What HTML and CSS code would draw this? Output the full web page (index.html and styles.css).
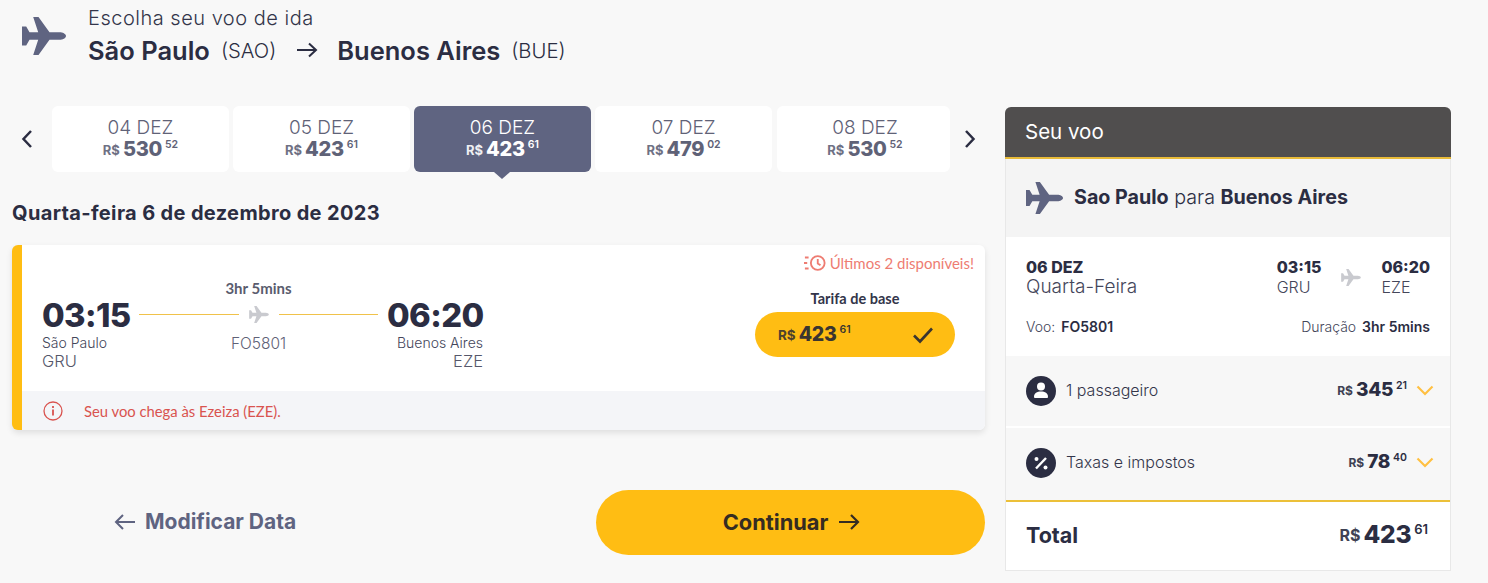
FILE: index.html
```html
<!DOCTYPE html>
<html lang="pt-BR">
<head>
<meta charset="utf-8">
<title>Escolha seu voo</title>
<link rel="stylesheet" href="styles.css">
</head>
<body>
<svg class="defs" width="0" height="0" aria-hidden="true"><defs>
<symbol id="plane" viewBox="0 0 44 38"><path d="M44 19c0-2.200-3.500-3.800-6.500-3.800H27.500L16.500 0h-5.300l5 15.200H7.500L4.200 9.500H0v19h4.200l3.300-5.700h8.700L11.200 38h5.300l11-15.200H37.500c3 0 6.500-1.600 6.500-3.800z"/></symbol>
</defs></svg>
<main class="page">
  <section class="left">
    <header class="head">
      <svg class="head-plane"><use href="#plane"/></svg>
      <div class="head-text">
        <div class="head-sub">Escolha seu voo de ida</div>
        <div class="head-route"><b>São Paulo</b><span class="code">(SAO)</span>
          <svg class="route-arrow" viewBox="0 0 22 16"><path d="M1 8h19M13 1.500 20 8l-7 6.500" fill="none" stroke="currentColor" stroke-width="2"/></svg>
          <b>Buenos Aires</b><span class="code">(BUE)</span></div>
      </div>
    </header>
    <nav class="dates">
      <svg class="nav-chev" viewBox="0 0 12 20"><path d="M10 2 2.500 10l7.500 8" fill="none" stroke="currentColor" stroke-width="2.500"/></svg>
      <div class="date"><div class="d">04 DEZ</div><div class="p"><small>R$</small><b>530</b><sup>52</sup></div></div>
      <div class="date"><div class="d">05 DEZ</div><div class="p"><small>R$</small><b>423</b><sup>61</sup></div></div>
      <div class="date active"><div class="d">06 DEZ</div><div class="p"><small>R$</small><b>423</b><sup>61</sup></div></div>
      <div class="date"><div class="d">07 DEZ</div><div class="p"><small>R$</small><b>479</b><sup>02</sup></div></div>
      <div class="date last"><div class="d">08 DEZ</div><div class="p"><small>R$</small><b>530</b><sup>52</sup></div></div>
      <svg class="nav-chev" viewBox="0 0 12 20"><path d="M2 2l7.500 8L2 18" fill="none" stroke="currentColor" stroke-width="2.500"/></svg>
    </nav>
    <h2 class="day">Quarta-feira 6 de dezembro de 2023</h2>
    <article class="card">
      <div class="card-body">
        <div class="alert">
          <svg class="alert-ico" viewBox="0 0 24 18"><g fill="none" stroke="currentColor" stroke-width="2"><circle cx="15" cy="9" r="7.500"/><path d="M15 4.500V9.500l3 2"/><path d="M1 3h4M0 9h3.500M1 15h4"/></g></svg>
          <span>Últimos 2 disponíveis!</span>
        </div>
        <div class="flight">
          <div class="end">
            <div class="time">03:15</div><div class="city">São Paulo</div><div class="iata">GRU</div>
          </div>
          <div class="mid">
            <div class="dur">3hr 5mins</div>
            <div class="track"><i></i><svg class="mini-plane"><use href="#plane"/></svg><i></i></div>
            <div class="fno">FO5801</div>
          </div>
          <div class="end right">
            <div class="time">06:20</div><div class="city">Buenos Aires</div><div class="iata">EZE</div>
          </div>
          <div class="fare">
            <div class="fare-name">Tarifa de base</div>
            <div class="fare-btn">
              <div class="p"><small>R$</small><b>423</b><sup>61</sup></div>
              <svg class="check" viewBox="0 0 22 18"><path d="M2 9.500 8 15.500 20 2.500" fill="none" stroke="currentColor" stroke-width="2.600"/></svg>
            </div>
          </div>
        </div>
        <div class="note">
          <svg class="note-ico" viewBox="0 0 20 20"><circle cx="10" cy="10" r="9" fill="none" stroke="currentColor" stroke-width="1.300"/><path d="M10 8.500v6M10 5v2" stroke="currentColor" stroke-width="1.800"/></svg>
          <span>Seu voo chega às Ezeiza (EZE).</span>
        </div>
      </div>
    </article>
    <div class="actions">
      <a class="back"><svg class="back-arrow" viewBox="0 0 22 16"><path d="M21 8H2M9 1 2 8l7 7" fill="none" stroke="currentColor" stroke-width="2"/></svg>Modificar Data</a>
      <a class="go">Continuar<svg class="go-arrow" viewBox="0 0 22 16"><path d="M1 8h19M13 1l7 7-7 7" fill="none" stroke="currentColor" stroke-width="2.200"/></svg></a>
    </div>
  </section>
  <aside class="side">
    <div class="side-head">Seu voo</div>
    <div class="side-route"><svg class="side-plane"><use href="#plane"/></svg><div><b>Sao Paulo</b> para <b>Buenos Aires</b></div></div>
    <div class="side-info">
      <div class="info-top">
        <div class="col"><b>06 DEZ</b><span class="weekday">Quarta-Feira</span></div>
        <div class="times">
          <div class="col"><b>03:15</b><span>GRU</span></div>
          <svg class="mini-plane"><use href="#plane"/></svg>
          <div class="col"><b>06:20</b><span>EZE</span></div>
        </div>
      </div>
      <div class="info-bot">
        <div>Voo: <b>FO5801</b></div>
        <div>Duração <b>3hr 5mins</b></div>
      </div>
    </div>
    <div class="row">
      <svg class="round" viewBox="0 0 30 30"><circle cx="15" cy="15" r="15" fill="#2b2d42"/><circle cx="15" cy="10.500" r="4" fill="#fff"/><path d="M8 21c0-4 3-5.500 7-5.500s7 1.500 7 5.500c0 .8-.6 1-1.200 1H9.200C8.600 22 8 21.800 8 21z" fill="#fff"/></svg>
      <span class="row-name">1 passageiro</span>
      <div class="p"><small>R$</small><b>345</b><sup>21</sup></div>
      <svg class="chev" viewBox="0 0 18 11"><path d="M1.500 1.500 9 9l7.500-7.500" fill="none" stroke="currentColor" stroke-width="2.200"/></svg>
    </div>
    <div class="row row2">
      <svg class="round" viewBox="0 0 30 30"><circle cx="15" cy="15" r="15" fill="#2b2d42"/><path d="M10 20.500 20 10" stroke="#fff" stroke-width="2.400"/><circle cx="10.500" cy="11" r="2" fill="#fff"/><circle cx="19.500" cy="19.500" r="2" fill="#fff"/></svg>
      <span class="row-name">Taxas e impostos</span>
      <div class="p"><small>R$</small><b>78</b><sup>40</sup></div>
      <svg class="chev" viewBox="0 0 18 11"><path d="M1.500 1.500 9 9l7.500-7.500" fill="none" stroke="currentColor" stroke-width="2.200"/></svg>
    </div>
    <div class="total">
      <b class="total-name">Total</b>
      <div class="p"><small>R$</small><b>423</b><sup>61</sup></div>
    </div>
  </aside>
</main>
</body>
</html>
```

FILE: styles.css
```css
* { box-sizing: border-box; }
html, body { margin: 0; height: 583px; overflow: hidden; }
body { background: #f8f8f8; color: #2b2d42; font-family: Inter, "Liberation Sans", sans-serif; }
.defs { display: block; height: 0; }
.page { display: flex; padding: 0 37px 0 12px; gap: 20px; }
.left { width: 973px; flex: none; }
.side { width: 446px; flex: none; margin-top: 107px; border: 1px solid #e8e8e8; border-top: 0; border-radius: 6px 6px 0 0; height: 464px; background: #fff; }

.head { display: flex; height: 106px; padding: 5px 0 0 10px; }
.head-plane { width: 44px; height: 38px; margin: 12px 22px 0 0; fill: #5f6481; }
.head-sub { font-size: 20px; letter-spacing: .5px; font-weight: 300; color: #33354a; line-height: 26px; }
.head-route { display: flex; align-items: center; font-size: 25.500px; height: 36px; margin-top: 1px; color: #2b2d42; }
.head-route b { font-weight: 600; }
.code { font-size: 20.300px; font-weight: 300; margin-left: 11px; }
.route-arrow { width: 22px; height: 16px; margin: 0 19px 0 20px; }

.dates { display: flex; align-items: center; height: 66px; margin-right: -2px; }
.nav-chev { width: 12px; height: 20px; flex: none; color: #2b2d42; margin: 0 19px 0 9px; }
.nav-chev:last-child { margin: 0 0 0 14px; }
.date { width: 177px; height: 66px; margin-right: 4px; background: #fff; border-radius: 6px; text-align: center; color: #5f6277; position: relative; padding-top: 11px; }
.date.last { width: 173px; margin: 0 0 0 1px; padding-left: 3px; }
.date.active { background: #5f6481; color: #fff; }
.date.active::after { content: ""; position: absolute; left: 80px; bottom: -7px; border: 8px solid transparent; border-bottom: 0; border-top: 7px solid #5f6481; }
.d { font-size: 19px; font-weight: 300; line-height: 21px; }
.p { display: flex; align-items: flex-start; justify-content: center; font-weight: 700; }
.p small { font-size: 13px; line-height: 22px; margin: 1px 3px 0 0; opacity: .9; }
.p b { font-size: 20px; line-height: 22px; font-weight: 800; letter-spacing: -.3px; }
.p sup { font-size: 10.500px; line-height: 14px; margin-left: 3px; font-weight: 600; }

.day { font-size: 20px; letter-spacing: .35px; font-weight: 700; margin: 31px 0 0; height: 42px; line-height: 21px; color: #2b2d42; }

.card { height: 185px; border-left: 10px solid #ffbd13; border-radius: 6px; box-shadow: 0 3px 6px rgba(0, 0, 0, .1); background: #fff; overflow: hidden; }
.card-body { height: 100%; display: flex; flex-direction: column; }
.alert { height: 35px; padding: 8px 11px 0 0; display: flex; justify-content: flex-end; align-items: flex-start; font: 400 15px/20px Lato, sans-serif; color: #ee7c72; }
.alert-ico { width: 22px; height: 18px; margin: 1px 4px 0 0; }
.flight { flex: 1; display: flex; align-items: flex-start; padding-left: 20px; }
.end { width: 88px; margin-top: 15px; flex: none; }
.time { font-size: 32.800px; font-weight: 800; line-height: 40px; height: 40px; color: #2b2d42; letter-spacing: -.6px; white-space: nowrap; }
.city { font-size: 14px; font-weight: 300; line-height: 16px; color: #44465a; white-space: nowrap; }
.iata { font-size: 16.500px; font-weight: 300; line-height: 20px; color: #55576a; }
.end.right { width: 96px; text-align: right; }
.mid { width: 257px; padding: 0 9px 0 9px; text-align: center; color: #5f6277; }
.dur { font: 700 15px/18px Lato, sans-serif; color: #5a5c6e; margin-top: -1px; }
.track { display: flex; align-items: center; height: 19px; margin-top: 8px; gap: 10px; }
.track i { height: 1px; flex: 1; background: #f0c24a; }
.mini-plane { width: 20px; height: 17px; fill: #c9cacf; flex: none; }
.fno { font-size: 15.500px; font-weight: 300; line-height: 20px; margin-top: 10px; }
.fare { width: 200px; margin: 10px 0 0 272px; text-align: center; }
.fare-name { font: 700 14.500px/18px Lato, sans-serif; color: #33354a; }
.fare-btn { height: 45px; margin-top: 4px; background: #ffbd13; border-radius: 23px; display: flex; align-items: center; justify-content: space-between; padding: 0 21px 0 23px; color: #3a3530; }
.fare-btn .p b { font-size: 19.500px; }
.fare-btn .p small { font-size: 13.500px; }
.check { width: 22px; height: 18px; }
.note { height: 39px; background: #f4f5f8; display: flex; align-items: center; padding-left: 21px; font: 400 14.800px/20px Lato, sans-serif; color: #d9534f; }
.note-ico { width: 20px; height: 20px; margin-right: 21px; color: #d9534f; }

.actions { display: flex; justify-content: space-between; align-items: center; height: 65px; margin-top: 60px; padding-left: 102px; }
.back { display: flex; align-items: center; font-size: 21px; font-weight: 700; color: #5f6481; margin-top: -3px; }
.back-arrow { width: 22px; height: 16px; margin-right: 9px; margin-top: 1px; }
.go { width: 389px; height: 65px; border-radius: 33px; background: #ffbd13; color: #352c22; display: flex; align-items: center; justify-content: center; font-size: 21.800px; font-weight: 700; padding: 0 0 2px 2px; }
.go-arrow { width: 22px; height: 16px; margin-left: 10px; }

.side-head { margin: 0 -1px; height: 52px; padding: 0 0 0 20px; background: #504e4e; border-bottom: 2px solid #e8bb39; border-radius: 6px 6px 0 0; color: #fff; font-size: 20.500px; font-weight: 400; line-height: 50px; }
.side-route { height: 78px; background: #f4f4f4; display: flex; align-items: center; padding: 0 0 2px 20px; font-size: 19.700px; font-weight: 300; color: #2b2d42; }
.side-route b { font-weight: 700; }
.side-plane { width: 37px; height: 32px; fill: #5f6481; margin: 2px 11px 0 0; flex: none; }
.side-info { height: 119px; padding: 20px 20px 0; }
.info-top { display: flex; justify-content: space-between; }
.col { display: flex; flex-direction: column; font-size: 17px; line-height: 20px; }
.col b { font-weight: 800; font-size: 16px; }
.col span { font-weight: 300; color: #44465a; }
.col .weekday { font-size: 19px; }
.times { display: flex; align-items: center; gap: 20px; }
.times .col span { font-size: 16px; }
.info-bot { display: flex; justify-content: space-between; margin-top: 21px; font-size: 14px; font-weight: 300; line-height: 18px; color: #44465a; }
.info-bot b { font-weight: 600; color: #2b2d42; margin-left: 2px; }
.row { height: 70px; background: #f7f7f7; display: flex; align-items: center; padding: 0 16px 0 20px; }
.row2 { height: 72px; margin-top: 2px; padding-bottom: 2px; }
.round { width: 30px; height: 30px; flex: none; margin-right: 10px; }
.row-name { flex: 1; font-size: 16px; font-weight: 300; color: #33354a; margin-top: -2px; }
.row .p { margin-top: -2px; }
.row .p small { font-size: 12px; }
.row .p b { font-size: 19px; }
.chev { width: 18px; height: 11px; color: #ffc042; margin: -2px 0 0 9px; }
.total { height: 69px; border-top: 2px solid #ecc039; display: flex; align-items: center; justify-content: space-between; padding: 0 22px 2px 20px; }
.total-name { font-size: 21.500px; font-weight: 700; }
.total .p b { font-size: 24.500px; line-height: 28px; }
.total .p small { font-size: 16px; line-height: 28px; }
.total .p sup { font-size: 13px; line-height: 18px; }
```
